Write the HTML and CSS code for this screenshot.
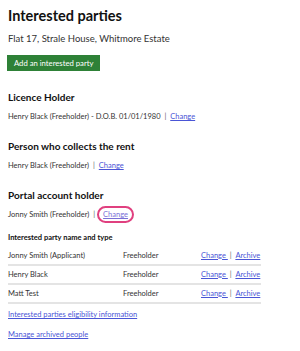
FILE: index.html
```html
<!DOCTYPE html>
<html lang="en">
<head>
    <meta charset="UTF-8">
    <title>Interested parties</title>
    <link rel="stylesheet" href="styles.css">
</head>
<body>
    <div class="page">
        <h1 class="title">Interested parties</h1>
        <p class="address">Flat 17, Strale House, Whitmore Estate</p>
        <button class="btn-add">Add an interested party</button>

        <h2 class="section-title">Licence Holder</h2>
        <p class="line">Henry Black (Freeholder) - D.O.B. 01/01/1980 <span class="sep">|</span> <a href="#">Change</a></p>

        <h2 class="section-title">Person who collects the rent</h2>
        <p class="line">Henry Black (Freeholder) <span class="sep">|</span> <a href="#">Change</a></p>

        <h2 class="section-title">Portal account holder</h2>
        <p class="line line-last">Jonny Smith (Freeholder) <span class="sep">|</span><a href="#" class="focused">Change</a></p>

        <table class="parties">
            <thead>
                <tr><th colspan="3">Interested party name and type</th></tr>
            </thead>
            <tbody>
                <tr>
                    <td class="col-name">Jonny Smith (Applicant)</td>
                    <td class="col-type">Freeholder</td>
                    <td class="col-act"><a href="#">Change </a><span class="sep">|</span> <a href="#">Archive</a></td>
                </tr>
                <tr>
                    <td class="col-name">Henry Black</td>
                    <td class="col-type">Freeholder</td>
                    <td class="col-act"><a href="#">Change </a><span class="sep">|</span> <a href="#">Archive</a></td>
                </tr>
                <tr>
                    <td class="col-name">Matt Test</td>
                    <td class="col-type">Freeholder</td>
                    <td class="col-act"><a href="#">Change </a><span class="sep">|</span> <a href="#">Archive</a></td>
                </tr>
            </tbody>
        </table>

        <p class="foot-link"><a href="#">Interested parties eligibility information</a></p>
        <p class="foot-link"><a href="#">Manage archived people</a></p>
    </div>
</body>
</html>
```

FILE: styles.css
```css
body, html {
    margin: 0;
    padding: 0;
    background: #fff;
    color: #222;
    font-family: Lato, "Liberation Sans", sans-serif;
}
.page {
    padding: 6px 8px;
}
.title {
    font-size: 14.5px;
    line-height: 20px;
    font-weight: 700;
    margin: 0 0 6px;
    color: #111;
}
.address {
    font-size: 9.5px;
    line-height: 14px;
    margin: 0 0 9px;
    color: #333;
}
.btn-add {
    display: block;
    font-family: inherit;
    font-size: 7.7px;
    line-height: 10px;
    color: #fff;
    background: #2e8137;
    border: none;
    padding: 3px 7px;
    margin: 0 0 19px -1px;
}
.section-title {
    font-size: 10px;
    line-height: 14px;
    font-weight: 700;
    margin: 0 0 7px;
    color: #111;
}
.line {
    font-size: 7.5px;
    line-height: 12px;
    margin: 0 0 16px;
    color: #333;
}
.line-last {
    margin-bottom: 11px;
}
.sep {
    color: #666;
    margin: 0 2px;
}
a {
    color: #4a55d6;
}
.focused {
    border: 2px solid #e0407f;
    border-radius: 9px;
    padding: 2px 4px;
    color: #7b6fd6;
}
.parties {
    border-collapse: collapse;
    width: 253px;
    font-size: 7.5px;
    line-height: 12px;
    margin: 0 0 5px;
}
.parties th {
    text-align: left;
    font-weight: 700;
    padding: 0 0 3px;
    color: #111;
}
.parties td {
    padding: 2.5px 0;
    border-bottom: 2px solid #e4e4e4;
    color: #333;
    white-space: nowrap;
}
.col-name { width: 115px; }
.col-type { width: 78px; }
.foot-link {
    font-size: 7.5px;
    line-height: 12px;
    margin: 0 0 8px;
}
```
